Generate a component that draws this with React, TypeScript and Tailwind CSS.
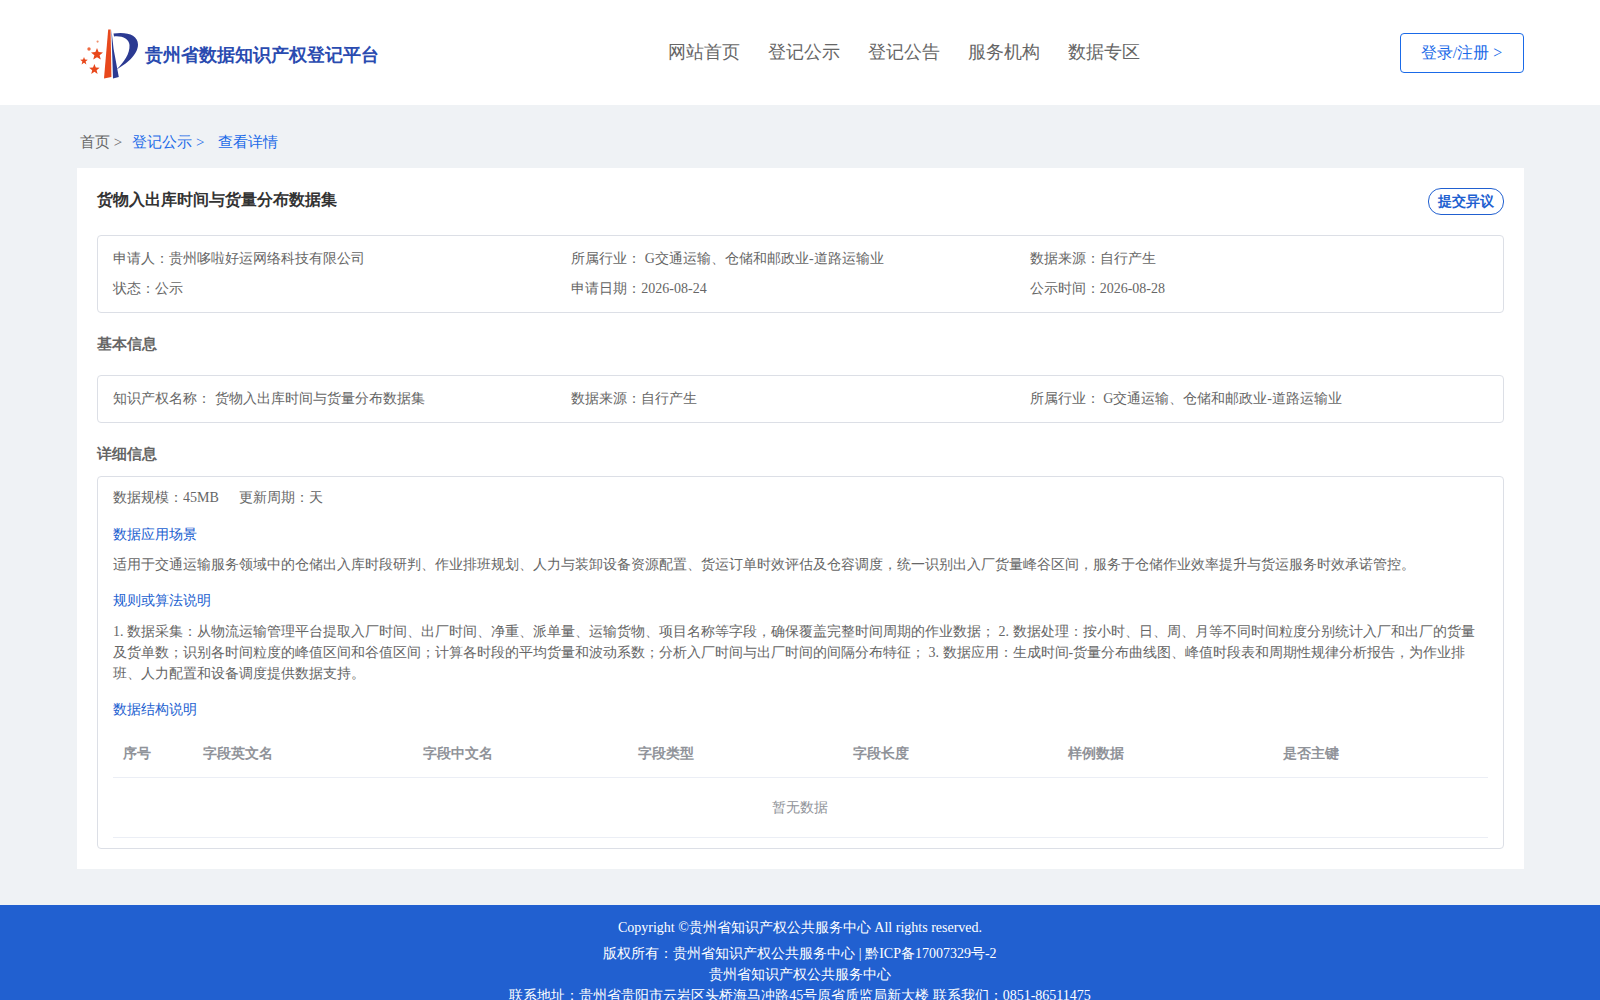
const navItems = ["网站首页", "登记公示", "登记公告", "服务机构", "数据专区"];
const columns = [
  { name: "序号", width: "w-[80px]" },
  { name: "字段英文名", width: "w-[220px]" },
  { name: "字段中文名", width: "w-[215px]" },
  { name: "字段类型", width: "w-[215px]" },
  { name: "字段长度", width: "w-[215px]" },
  { name: "样例数据", width: "w-[215px]" },
  { name: "是否主键", width: "flex-1" },
];

const Logo = () => (
  <svg width="60" height="52" viewBox="0 0 60 52" className="shrink-0">
    <path d="M28.2 2.5 L30.6 2.5 L31.4 50 L24 51.5 Z" fill="#e8481c" />
    <path d="M31.4 2.5 L33.6 22 L38.8 50 L33 51.5 Z" fill="#2b3a92" />
    <path d="M33.5 6.5 C47 4.5 58 8 58 17.5 C58 28 46 37 36.5 42.5 C44 35 50 27 49.5 18 C49 12 42 8.5 34 9.5 Z" fill="#2b3a92" />
    <polygon points="17,21 18.6,25 23,25.4 19.6,28.2 20.8,32.6 17,30.2 13.2,32.6 14.4,28.2 11,25.4 15.4,25" fill="#e8481c" />
    <polygon points="14.4,37 15.8,40.6 19.6,40.8 16.6,43.2 17.6,47 14.4,44.8 11.2,47 12.2,43.2 9.2,40.8 13,40.6" fill="#e8481c" />
    <polygon points="4,30 5,32.6 7.8,32.8 5.6,34.6 6.4,37.4 4,35.8 1.6,37.4 2.4,34.6 0.2,32.8 3,32.6" fill="#e8481c" />
    <circle cx="9" cy="22" r="1.7" fill="#ee6a40" />
    <circle cx="17.6" cy="14.6" r="1.1" fill="#f0906c" />
  </svg>
);

const Cell = ({ children }: { children: React.ReactNode }) => <div className="flex-1 basis-0">{children}</div>;

const SubTitle = ({ children }: { children: React.ReactNode }) => (
  <div className="text-[14px] leading-[20px] text-[#2160d0]">{children}</div>
);

export default function App() {
  return (
    <div className="min-h-[1000px] bg-[#eff2f5] font-['Liberation_Serif',serif] text-[14px] text-[#666666]">
      {/* 顶部导航 */}
      <header className="flex h-[105px] items-center bg-white pl-[80px] pr-[76px]">
        <div className="flex w-[520px] items-center">
          <Logo />
          <span className="ml-[5px] mt-[5px] text-[18px] font-bold text-[#2a4bb0]">贵州省数据知识产权登记平台</span>
        </div>
        <nav className="flex gap-[28px] pb-[1px] pl-[68px] text-[18px] text-[#666666]">
          {navItems.map((item) => (
            <span key={item}>{item}</span>
          ))}
        </nav>
        <button className="ml-auto h-[40px] w-[124px] rounded-[4px] border border-[#1a6ae8] pr-[1px] pt-[1px] text-[16px] text-[#1a6ae8]">
          登录/注册 &gt;
        </button>
      </header>

      {/* 面包屑 */}
      <div className="flex h-[63px] items-center pl-[80px] pt-[12px] text-[15px] leading-none">
        <span>首页 &gt;</span>
        <span className="ml-[10px] text-[#1a6ae8]">登记公示 &gt;</span>
        <span className="ml-[14px] text-[#1a6ae8]">查看详情</span>
      </div>

      <main className="ml-[77px] mr-[76px] bg-white p-[20px]">
        <div className="flex h-[27px] items-start justify-between">
          <h1 className="text-[16px] font-bold leading-[24px] text-[#333333]">货物入出库时间与货量分布数据集</h1>
          <button className="h-[27px] w-[76px] rounded-[13px] border border-[#2160d0] text-[14px] font-bold leading-none text-[#2160d0]">
            提交异议
          </button>
        </div>

        <div className="mt-[20px] h-[78px] rounded-[4px] border border-[#dcdfe6] px-[15px] pt-[8px] leading-[30px]">
          <div className="flex">
            <Cell>申请人：贵州哆啦好运网络科技有限公司</Cell>
            <Cell>所属行业： G交通运输、仓储和邮政业-道路运输业</Cell>
            <Cell>数据来源：自行产生</Cell>
          </div>
          <div className="flex">
            <Cell>状态：公示</Cell>
            <Cell>申请日期：2026-08-24</Cell>
            <Cell>公示时间：2026-08-28</Cell>
          </div>
        </div>

        <div className="mb-[20px] mt-[20px] text-[15px] font-bold leading-[22px]">基本信息</div>

        <div className="flex h-[48px] items-center rounded-[4px] border border-[#dcdfe6] px-[15px] pb-[1px]">
          <Cell>知识产权名称： 货物入出库时间与货量分布数据集</Cell>
          <Cell>数据来源：自行产生</Cell>
          <Cell>所属行业： G交通运输、仓储和邮政业-道路运输业</Cell>
        </div>

        <div className="mb-[11px] mt-[20px] text-[15px] font-bold leading-[22px]">详细信息</div>

        <div className="rounded-[4px] border border-[#dcdfe6] px-[15px] py-[10px]">
          <div className="flex h-[21px] items-center gap-[20px]">
            <span>数据规模：45MB</span>
            <span>更新周期：天</span>
          </div>

          <div className="mt-[17px]">
            <SubTitle>数据应用场景</SubTitle>
          </div>
          <p className="mt-[9px] leading-[21px]">
            适用于交通运输服务领域中的仓储出入库时段研判、作业排班规划、人力与装卸设备资源配置、货运订单时效评估及仓容调度，统一识别出入厂货量峰谷区间，服务于仓储作业效率提升与货运服务时效承诺管控。
          </p>

          <div className="mt-[16px]">
            <SubTitle>规则或算法说明</SubTitle>
          </div>
          <p className="mt-[10px] leading-[21px]">
            1. 数据采集：从物流运输管理平台提取入厂时间、出厂时间、净重、派单量、运输货物、项目名称等字段，确保覆盖完整时间周期的作业数据； 2. 数据处理：按小时、日、周、月等不同时间粒度分别统计入厂和出厂的货量及货单数；识别各时间粒度的峰值区间和谷值区间；计算各时段的平均货量和波动系数；分析入厂时间与出厂时间的间隔分布特征； 3. 数据应用：生成时间-货量分布曲线图、峰值时段表和周期性规律分析报告，为作业排班、人力配置和设备调度提供数据支持。
          </p>

          <div className="mt-[16px]">
            <SubTitle>数据结构说明</SubTitle>
          </div>

          {/* 数据结构表格 */}
          <div className="mt-[10px] flex h-[48px] items-center border-b border-[#ebeef5] pl-[10px] font-bold text-[#909399]">
            {columns.map((col) => (
              <div key={col.name} className={col.width}>
                {col.name}
              </div>
            ))}
          </div>
          <div className="flex h-[60px] items-center justify-center border-b border-[#ebeef5] pr-[1px] text-[#909399]">暂无数据</div>
        </div>
      </main>

      <footer className="mt-[36px] bg-[#2160d0] pb-[10px] pt-[12px] text-center text-[14px] leading-[21px] text-white">
        <div className="mb-[5px]">Copyright ©贵州省知识产权公共服务中心 All rights reserved.</div>
        <div>版权所有：贵州省知识产权公共服务中心 | 黔ICP备17007329号-2</div>
        <div>贵州省知识产权公共服务中心</div>
        <div>联系地址：贵州省贵阳市云岩区头桥海马冲路45号原省质监局新大楼 联系我们：0851-86511475</div>
      </footer>
    </div>
  );
}
